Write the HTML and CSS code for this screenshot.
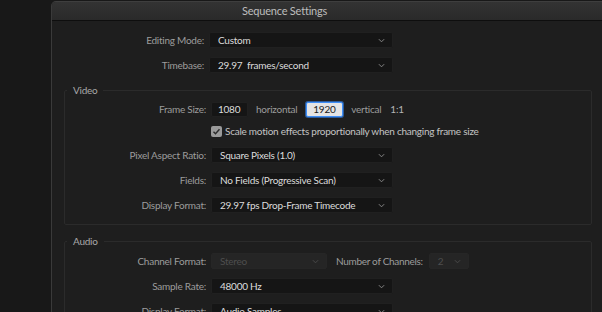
FILE: index.html
```html
<!DOCTYPE html>
<html>
<head>
<meta charset="utf-8">
<link rel="stylesheet" href="styles.css">
</head>
<body>
<div class="screen">
  <div class="window">
    <div class="titlebar">Sequence Settings</div>
    <div class="content">
      <div class="row top">
        <span class="label">Editing Mode:</span>
        <div class="select wide"><span>Custom</span><svg class="chev" viewBox="0 0 8 5"><path d="M1 1l3 3 3-3"/></svg></div>
      </div>
      <div class="row top">
        <span class="label">Timebase:</span>
        <div class="select wide"><span>29.97&nbsp; frames/second</span><svg class="chev" viewBox="0 0 8 5"><path d="M1 1l3 3 3-3"/></svg></div>
      </div>

      <fieldset class="group video">
        <legend>Video</legend>
        <div class="row">
          <span class="label">Frame Size:</span>
          <div class="field">1080</div>
          <span class="unit">horizontal</span>
          <div class="field focus">1920</div>
          <span class="unit">vertical</span>
          <span class="unit ratio">1:1</span>
        </div>
        <div class="row check">
          <span class="label"></span>
          <span class="box"><svg viewBox="0 0 11 11"><path d="M2.5 5.8l2 2 4-4.6"/></svg></span>
          <span class="value">Scale motion effects proportionally when changing frame size</span>
        </div>
        <div class="row">
          <span class="label">Pixel Aspect Ratio:</span>
          <div class="select"><span>Square Pixels (1.0)</span><svg class="chev" viewBox="0 0 8 5"><path d="M1 1l3 3 3-3"/></svg></div>
        </div>
        <div class="row">
          <span class="label">Fields:</span>
          <div class="select"><span>No Fields (Progressive Scan)</span><svg class="chev" viewBox="0 0 8 5"><path d="M1 1l3 3 3-3"/></svg></div>
        </div>
        <div class="row last">
          <span class="label">Display Format:</span>
          <div class="select"><span>29.97 fps Drop-Frame Timecode</span><svg class="chev" viewBox="0 0 8 5"><path d="M1 1l3 3 3-3"/></svg></div>
        </div>
      </fieldset>

      <fieldset class="group audio">
        <legend>Audio</legend>
        <div class="row">
          <span class="label">Channel Format:</span>
          <div class="select disabled chan"><span>Stereo</span><svg class="chev" viewBox="0 0 8 5"><path d="M1 1l3 3 3-3"/></svg></div>
          <span class="label2">Number of Channels:</span>
          <div class="select disabled num"><span>2</span><svg class="chev" viewBox="0 0 8 5"><path d="M1 1l3 3 3-3"/></svg></div>
        </div>
        <div class="row">
          <span class="label">Sample Rate:</span>
          <div class="select"><span>48000 Hz</span><svg class="chev" viewBox="0 0 8 5"><path d="M1 1l3 3 3-3"/></svg></div>
        </div>
        <div class="row">
          <span class="label">Display Format:</span>
          <div class="select"><span>Audio Samples</span><svg class="chev" viewBox="0 0 8 5"><path d="M1 1l3 3 3-3"/></svg></div>
        </div>
      </fieldset>
    </div>
  </div>
</div>
</body>
</html>
```
FILE: styles.css
```css
* { box-sizing: border-box; }
html, body {
  margin: 0;
  padding: 0;
  width: 602px;
  height: 312px;
  overflow: hidden;
  background: #181818;
}
body {
  font-family: Lato, "Open Sans", sans-serif;
  font-size: 10px;
  letter-spacing: -0.25px;
}
.screen {
  display: flex;
  padding: 1px 0 0 51px;
  height: 312px;
}
.window {
  flex: 1;
  background: #1e1e1e;
  border-left: 1px solid #3a3a3a;
  border-top: 1px solid #3e3e3e;
  border-top-left-radius: 5px;
  overflow: hidden;
  display: flex;
  flex-direction: column;
}
.titlebar {
  height: 19px;
  background: linear-gradient(#333333, #2a2a2a);
  border-bottom: 1px solid #0e0e0e;
  color: #bdbdbd;
  font-size: 11px;
  letter-spacing: -0.2px;
  text-align: center;
  line-height: 18px;
  padding-right: 85px;
  flex: none;
}
.content {
  padding: 11px 10px 0 12px;
  display: flex;
  flex-direction: column;
}
.row {
  display: flex;
  align-items: center;
  height: 16px;
  margin-bottom: 9px;
  color: #d6d6d6;
}
.label {
  color: #9c9c9c;
  text-align: right;
  width: 140px;
  flex: none;
  margin-right: 5px;
}
.select {
  height: 16px;
  width: 182px;
  background: #151515;
  border: 1px solid #202020;
  border-radius: 2px;
  display: flex;
  align-items: center;
  justify-content: space-between;
  padding: 0 7px 0 8px;
  color: #dcdcdc;
  flex: none;
}
.select.wide { width: 184px; }
.chev {
  width: 7px;
  height: 5px;
  fill: none;
  stroke: #8a8a8a;
  stroke-width: 1.1;
}
.group {
  margin: 0;
  padding: 5px 0 0 0;
  border: 1px solid #2b2b2b;
  border-radius: 2px;
  min-width: 0;
}
.group legend {
  color: #a8a8a8;
  padding: 0 6px 0 6px;
  margin-left: 2px;
  line-height: 12px;
}
.group .label { width: 141px; }
.video { margin-top: 2px; padding-bottom: 1px; }
.video .last { margin-bottom: 10px; }
.audio { margin-top: 10px; padding-top: 6px; }
.field {
  width: 37px;
  height: 15px;
  background: #151515;
  border: 1px solid #202020;
  border-radius: 2px;
  padding-left: 6px;
  line-height: 13px;
  color: #dcdcdc;
  flex: none;
}
.field.focus {
  background: #e4e4e4;
  color: #202020;
  border: 1.5px solid #3e8ef7;
  box-shadow: 0 0 0 1px #2a5a9a;
}
.unit {
  color: #9c9c9c;
  margin: 0 9px 0 8px;
}
.unit.ratio { margin-left: 0; color: #b5b5b5; }
.check { margin-top: -3px; margin-bottom: 8px; }
.box {
  width: 11px;
  height: 11px;
  background: #9a9a9a;
  border-radius: 2px;
  margin-right: 3px;
  display: flex;
  flex: none;
}
.box svg {
  width: 11px;
  height: 11px;
  fill: none;
  stroke: #2a2a2a;
  stroke-width: 1.4;
}
.check .value { color: #c4c4c4; }
.select.disabled {
  background: #252525;
  border-color: #262626;
  color: #4e4e4e;
}
.select.disabled .chev { stroke: #4a4a4a; }
.select.chan { width: 116px; }
.label2 { color: #9c9c9c; margin: 0 6px 0 9px; letter-spacing: -0.3px; }
.select.num { width: 40px; }
```
